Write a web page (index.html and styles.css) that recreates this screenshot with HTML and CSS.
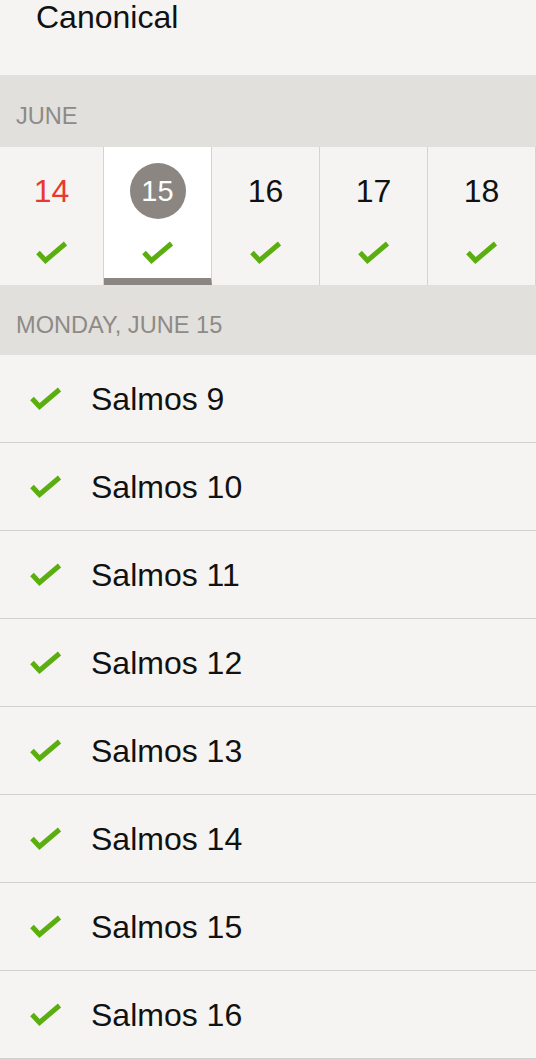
FILE: index.html
```html
<!DOCTYPE html>
<html>
<head>
<meta charset="utf-8">
<link rel="stylesheet" href="styles.css">
</head>
<body>
<div class="top">Canonical</div>
<div class="section section-month">JUNE</div>
<div class="days">
  <div class="day day-first"><span class="num num-red">14</span><svg class="check" viewBox="0 0 32 24"><path d="M2 11.5 L9.5 19.5 L29.5 2.5"/></svg></div>
  <div class="day day-selected"><span class="num num-circle">15</span><svg class="check" viewBox="0 0 32 24"><path d="M2 11.5 L9.5 19.5 L29.5 2.5"/></svg></div>
  <div class="day"><span class="num">16</span><svg class="check" viewBox="0 0 32 24"><path d="M2 11.5 L9.5 19.5 L29.5 2.5"/></svg></div>
  <div class="day"><span class="num">17</span><svg class="check" viewBox="0 0 32 24"><path d="M2 11.5 L9.5 19.5 L29.5 2.5"/></svg></div>
  <div class="day"><span class="num">18</span><svg class="check" viewBox="0 0 32 24"><path d="M2 11.5 L9.5 19.5 L29.5 2.5"/></svg></div>
</div>
<div class="section section-date">MONDAY, JUNE 15</div>
<ul class="list">
  <li class="row"><svg class="check" viewBox="0 0 32 24"><path d="M2 11.5 L9.5 19.5 L29.5 2.5"/></svg><span class="label">Salmos 9</span></li>
  <li class="row"><svg class="check" viewBox="0 0 32 24"><path d="M2 11.5 L9.5 19.5 L29.5 2.5"/></svg><span class="label">Salmos 10</span></li>
  <li class="row"><svg class="check" viewBox="0 0 32 24"><path d="M2 11.5 L9.5 19.5 L29.5 2.5"/></svg><span class="label">Salmos 11</span></li>
  <li class="row"><svg class="check" viewBox="0 0 32 24"><path d="M2 11.5 L9.5 19.5 L29.5 2.5"/></svg><span class="label">Salmos 12</span></li>
  <li class="row"><svg class="check" viewBox="0 0 32 24"><path d="M2 11.5 L9.5 19.5 L29.5 2.5"/></svg><span class="label">Salmos 13</span></li>
  <li class="row"><svg class="check" viewBox="0 0 32 24"><path d="M2 11.5 L9.5 19.5 L29.5 2.5"/></svg><span class="label">Salmos 14</span></li>
  <li class="row"><svg class="check" viewBox="0 0 32 24"><path d="M2 11.5 L9.5 19.5 L29.5 2.5"/></svg><span class="label">Salmos 15</span></li>
  <li class="row"><svg class="check" viewBox="0 0 32 24"><path d="M2 11.5 L9.5 19.5 L29.5 2.5"/></svg><span class="label">Salmos 16</span></li>
</ul>
</body>
</html>
```
FILE: styles.css
```css
* { box-sizing: border-box; }
html, body {
  margin: 0;
  padding: 0;
  background: #f5f4f2;
  font-family: "Liberation Sans", Arial, sans-serif;
  color: #111;
  overflow: hidden;
}
.top {
  height: 75px;
  padding-left: 36px;
  font-size: 32px;
  line-height: 34px;
}
.section {
  background: #e1e0dd;
  color: #8e8a86;
  font-size: 23.6px;
  line-height: 24px;
  padding-left: 16px;
}
.section-month {
  height: 72px;
  padding-top: 29px;
}
.section-date {
  height: 70px;
  padding-top: 28px;
}
.days {
  display: flex;
  height: 138px;
  overflow: hidden;
}
.day {
  flex: 0 0 108px;
  display: flex;
  flex-direction: column;
  align-items: center;
  padding-top: 16px;
  border-right: 1px solid #d5d3d0;
}
.day-first {
  flex-basis: 104px;
}
.day-selected {
  background: #ffffff;
  border-bottom: 7px solid #8b8681;
}
.num {
  display: block;
  height: 56px;
  line-height: 56px;
  font-size: 32px;
  color: #111;
}
.num-red {
  color: #e8392e;
}
.num-circle {
  width: 56px;
  border-radius: 50%;
  background: #8b8681;
  color: #fff;
  text-align: center;
  font-size: 29px;
}
.day .check {
  margin-top: 22px;
}
.check {
  width: 32px;
  height: 24px;
  flex: 0 0 auto;
}
.check path {
  fill: none;
  stroke: #5bae10;
  stroke-width: 5;
}
.list {
  list-style: none;
  margin: 0;
  padding: 0;
}
.row {
  height: 88px;
  display: flex;
  align-items: center;
  padding-left: 30px;
  gap: 29px;
  border-bottom: 1px solid #d3d1ce;
}
.label {
  font-size: 32px;
  line-height: 34px;
}
```
